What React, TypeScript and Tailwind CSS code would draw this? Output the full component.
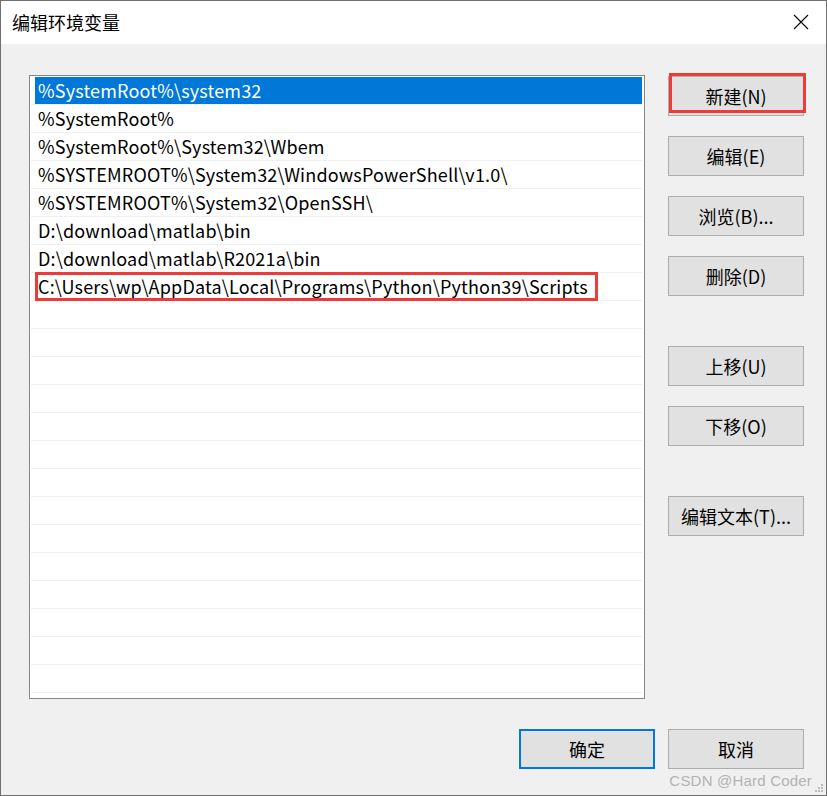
const paths = [
  "%SystemRoot%\\system32",
  "%SystemRoot%",
  "%SystemRoot%\\System32\\Wbem",
  "%SYSTEMROOT%\\System32\\WindowsPowerShell\\v1.0\\",
  "%SYSTEMROOT%\\System32\\OpenSSH\\",
  "D:\\download\\matlab\\bin",
  "D:\\download\\matlab\\R2021a\\bin",
  "C:\\Users\\wp\\AppData\\Local\\Programs\\Python\\Python39\\Scripts",
];

const font = { fontFamily: '"Microsoft YaHei", "Noto Sans CJK SC", sans-serif' };

function Btn({ label, primary }: { label: string; primary?: boolean }) {
  return (
    <button
      className={
        "w-[136px] h-[40px] bg-[#e1e1e1] text-[18px] text-black flex items-center justify-center " +
        (primary ? "border-2 border-[#0078d7]" : "border border-[#adadad]")
      }
    >
      {label}
    </button>
  );
}

export default function App() {
  const rows = Array.from({ length: 22 }, (_, i) => paths[i] ?? "");

  return (
    <div
      className="w-[827px] h-[796px] border border-[#707070] flex flex-col bg-[#f0f0f0] overflow-hidden"
      style={font}
    >
      {/* title bar */}
      <div className="h-[43px] bg-white flex items-center justify-between pl-[11px] pr-[17px]">
        <span className="text-[18px] text-black">编辑环境变量</span>
        <svg width="16" height="16" viewBox="0 0 16 16" className="mt-[-1px]">
          <path d="M1 1 L15 15 M15 1 L1 15" stroke="#000" strokeWidth="1.1" fill="none" />
        </svg>
      </div>

      {/* body */}
      <div className="relative flex-1 flex flex-col pl-[28px] pt-[31px]">
        <div className="flex gap-[23px]">
          <div className="w-[616px] h-[624px] border border-[#828790] bg-white pl-[1px] pr-[2px] pt-[1px] overflow-hidden">
            {rows.map((p, i) => (
              <div key={i} className="relative h-[28px] border-b border-[#f0f0f0] flex">
                <div
                  className={
                    "flex-1 ml-[4px] pl-[3px] flex items-center text-[18px] tracking-[0.17px] whitespace-nowrap " +
                    (i === 0 ? "bg-[#0078d7] text-white" : "text-black")
                  }
                >
                  {p}
                </div>
                {i === 7 && (
                  <div className="absolute left-[4px] top-[-1px] w-[563px] h-[29px] border-[3px] border-[#ef3a3a]" />
                )}
              </div>
            ))}
          </div>

          <div className="flex flex-col pt-[1px]">
            <div className="relative">
              <Btn label="新建(N)" />
              <div className="absolute left-[1px] top-[-3px] w-[137px] h-[40px] border-[3px] border-[#ef3a3a]" />
            </div>
            <div className="mt-[20px]"><Btn label="编辑(E)" /></div>
            <div className="mt-[20px]"><Btn label="浏览(B)..." /></div>
            <div className="mt-[20px]"><Btn label="删除(D)" /></div>
            <div className="mt-[50px]"><Btn label="上移(U)" /></div>
            <div className="mt-[20px]"><Btn label="下移(O)" /></div>
            <div className="mt-[50px]"><Btn label="编辑文本(T)..." /></div>
          </div>
        </div>

        <div className="flex justify-end gap-[13px] pr-[22px] mt-[30px]">
          <Btn label="确定" primary />
          <Btn label="取消" />
        </div>

        <div className="absolute right-[14px] bottom-[3px] text-[15px] text-[#b3b3b3] tracking-[0.2px]" style={{ fontFamily: '"Liberation Sans", sans-serif' }}>
          CSDN @Hard Coder
        </div>
        <svg width="10" height="10" viewBox="0 0 10 10" className="absolute right-[2px] bottom-[2px]">
          <rect x="7" y="1" width="2" height="2" fill="#bcbcbc" />
          <rect x="4" y="4" width="2" height="2" fill="#bcbcbc" />
          <rect x="7" y="4" width="2" height="2" fill="#bcbcbc" />
          <rect x="1" y="7" width="2" height="2" fill="#bcbcbc" />
          <rect x="4" y="7" width="2" height="2" fill="#bcbcbc" />
          <rect x="7" y="7" width="2" height="2" fill="#bcbcbc" />
        </svg>
      </div>
    </div>
  );
}
